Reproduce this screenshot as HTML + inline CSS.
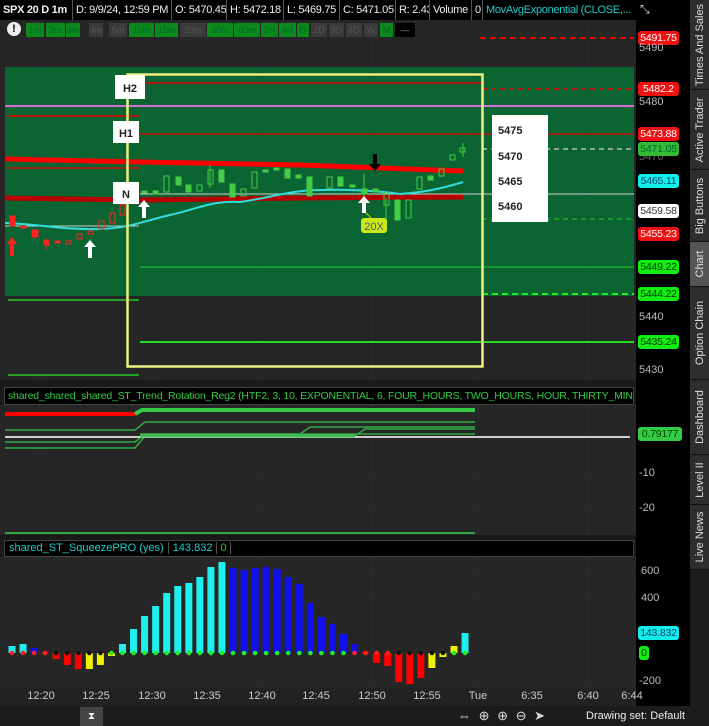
<!DOCTYPE html>
<html><head><meta charset="utf-8"><style>
*{margin:0;padding:0;box-sizing:border-box}
body{width:709px;height:726px;background:#1a1a1a;font-family:"Liberation Sans",sans-serif;position:relative;overflow:hidden;color:#ddd}
.a{position:absolute}
.hd{position:absolute;top:0;height:20px;background:#000;border-right:1px solid #555;font-size:11px;letter-spacing:-0.3px;line-height:20px;color:#eee;padding-left:3px;white-space:nowrap;overflow:hidden}
.tf{position:absolute;top:23px;height:14px;font-size:9px;line-height:14px;text-align:center;color:#123}
.g{background:#0a8a1a;color:#063}
.k{background:#3a3a3a;color:#555}
.pl{position:absolute;left:638px;width:41px;height:14px;border-radius:3px;font-size:10.5px;line-height:14px;text-align:center;letter-spacing:-0.2px}
.ax{position:absolute;font-size:11px;color:#bbb}
.tab{position:absolute;left:690px;width:19px;background:#2e2e2e;border-bottom:1px solid #111}
.tab span{position:absolute;left:50%;top:50%;transform:translate(-50%,-50%) rotate(-90deg);font-size:11px;white-space:nowrap;color:#ddd}
.t{position:absolute;top:690px;font-size:11px;color:#ccc;transform:translateX(-50%)}
</style></head><body>
<div class="a" style="left:0;top:20px;width:636px;height:360px;background:#262626"></div>
<div class="a" style="left:0;top:405px;width:636px;height:130px;background:#262626"></div>
<div class="a" style="left:0;top:557px;width:636px;height:131px;background:#262626"></div>
<div class="a" style="left:636px;top:20px;width:54px;height:686px;background:#000"></div>
<div class="a" style="left:0;top:688px;width:636px;height:18px;background:#222"></div>

<svg class="a" style="left:0;top:0" width="690" height="726">
<rect x="5" y="67" width="629" height="229" fill="#0b6533"/>
<g stroke="#3a3a3a" stroke-dasharray="1 3">
<line x1="40" y1="20" x2="40" y2="380"/><line x1="152" y1="20" x2="152" y2="380"/><line x1="262" y1="20" x2="262" y2="380"/><line x1="372" y1="20" x2="372" y2="380"/><line x1="478" y1="20" x2="478" y2="380"/><line x1="588" y1="20" x2="588" y2="380"/>
<line x1="40" y1="405" x2="40" y2="535"/><line x1="152" y1="405" x2="152" y2="535"/><line x1="262" y1="405" x2="262" y2="535"/><line x1="372" y1="405" x2="372" y2="535"/><line x1="478" y1="405" x2="478" y2="535"/><line x1="588" y1="405" x2="588" y2="535"/>
<line x1="40" y1="557" x2="40" y2="688"/><line x1="152" y1="557" x2="152" y2="688"/><line x1="262" y1="557" x2="262" y2="688"/><line x1="372" y1="557" x2="372" y2="688"/><line x1="478" y1="557" x2="478" y2="688"/><line x1="588" y1="557" x2="588" y2="688"/>
<line x1="0" y1="474" x2="636" y2="474"/><line x1="0" y1="509" x2="636" y2="509"/>
<line x1="0" y1="572" x2="636" y2="572"/><line x1="0" y1="599" x2="636" y2="599"/><line x1="0" y1="682" x2="636" y2="682"/>
</g>
<line x1="480" y1="38" x2="634" y2="38" stroke="#e00" stroke-width="2" stroke-dasharray="6 4"/>
<line x1="145" y1="83" x2="482" y2="83" stroke="#d00" stroke-width="1.5"/>
<line x1="482" y1="89" x2="634" y2="89" stroke="#d00" stroke-width="1.5" stroke-dasharray="5 4"/>
<line x1="5" y1="106" x2="634" y2="106" stroke="#d070d8" stroke-width="2"/>
<line x1="8" y1="116" x2="139" y2="116" stroke="#e00" stroke-width="1.5"/>
<line x1="140" y1="134" x2="634" y2="134" stroke="#d00" stroke-width="1.2"/>
<line x1="8" y1="168" x2="139" y2="168" stroke="#e00" stroke-width="1.2"/>
<path d="M5 159 L140 162 L300 165 L463 171" stroke="#f00" stroke-width="5" fill="none"/>
<path d="M5 198 L140 200 L300 198 L463 197" stroke="#b80000" stroke-width="5" fill="none"/>
<line x1="140" y1="194" x2="634" y2="194" stroke="#ccc" stroke-width="1"/>
<line x1="5" y1="226" x2="139" y2="226" stroke="#ccc" stroke-width="1"/>
<line x1="482" y1="149" x2="634" y2="149" stroke="#bbb" stroke-width="1.5" stroke-dasharray="5 4"/>
<line x1="482" y1="219" x2="634" y2="219" stroke="#2c2" stroke-width="1" stroke-dasharray="5 4"/>
<line x1="140" y1="267" x2="634" y2="267" stroke="#2c2" stroke-width="1"/>
<line x1="482" y1="294" x2="634" y2="294" stroke="#2e2" stroke-width="2" stroke-dasharray="6 4"/>
<line x1="8" y1="300" x2="139" y2="300" stroke="#2c2" stroke-width="1.5"/>
<line x1="140" y1="342" x2="634" y2="342" stroke="#2d2" stroke-width="2"/>
<line x1="8" y1="375" x2="139" y2="375" stroke="#2c2" stroke-width="1.5"/>
<path d="M5 223 C40 224 60 230 100 229 C130 228 140 222 170 215 C200 208 215 200 240 202 C270 198 290 190 320 190 C350 189 380 191 400 194 C430 192 450 186 463 182" stroke="#3dd" stroke-width="2" fill="none"/>
<rect x="127.5" y="74.5" width="355" height="292" fill="none" stroke="#f0f080" stroke-width="2.5"/>
<g stroke="#f22" fill="#f22">
<rect x="10" y="216" width="5" height="10"/><line x1="23" y1="226" x2="23" y2="229"/><rect x="21" y="226" width="5" height="2"/>
<rect x="32" y="230" width="6" height="7"/><rect x="44" y="240" width="5" height="5"/><line x1="46" y1="245" x2="46" y2="250"/>
<rect x="55" y="241" width="5" height="2"/><rect x="66" y="241" width="5" height="3" fill="none"/>
<rect x="77" y="234" width="5" height="5" fill="none"/><rect x="88" y="231" width="5" height="3" fill="none"/>
<rect x="99" y="221" width="5" height="8" fill="none"/><rect x="110" y="213" width="5" height="10" fill="none"/><rect x="120" y="205" width="5" height="10" fill="none"/>
</g>
<g stroke="#4c4" fill="#4c4">
<rect x="142" y="191" width="5" height="2"/><rect x="153" y="191" width="5" height="3"/><rect x="164" y="176" width="5" height="16" fill="none"/>
<rect x="176" y="177" width="5" height="8"/><rect x="186" y="185" width="5" height="7"/><rect x="197" y="185" width="5" height="6" fill="none"/>
<rect x="208" y="170" width="5" height="14" fill="none"/><line x1="210" y1="165" x2="210" y2="188"/><rect x="219" y="170" width="5" height="12"/>
<rect x="230" y="184" width="5" height="13"/><rect x="241" y="189" width="5" height="7" fill="none"/><rect x="252" y="172" width="5" height="16" fill="none"/>
<rect x="263" y="170" width="5" height="2"/><rect x="274" y="168" width="5" height="2"/><rect x="285" y="169" width="5" height="9"/>
<rect x="296" y="175" width="5" height="3"/><rect x="307" y="177" width="5" height="19"/><rect x="327" y="177" width="5" height="11" fill="none"/>
<rect x="338" y="177" width="5" height="9"/><rect x="350" y="185" width="5" height="2"/><rect x="362" y="189" width="5" height="5"/>
<line x1="364" y1="174" x2="364" y2="196"/><rect x="373" y="189" width="5" height="3"/><rect x="384" y="193" width="5" height="12" fill="none"/>
<line x1="386" y1="198" x2="386" y2="220"/><rect x="395" y="200" width="5" height="20"/><rect x="406" y="200" width="5" height="18" fill="none"/>
<rect x="417" y="177" width="5" height="12" fill="none"/><rect x="428" y="176" width="5" height="4"/><rect x="439" y="169" width="5" height="7" fill="none"/>
<rect x="450" y="155" width="5" height="5" fill="none"/><line x1="463" y1="143" x2="463" y2="157"/><rect x="460" y="148" width="5" height="4" fill="none"/>
</g>
<path d="M12 237 l-5 7 h3 v12 h4 v-12 h3z" fill="#f22"/>
<path d="M90 240 l-6 7 h4 v11 h4 v-11 h4z" fill="#fff"/>
<path d="M144 200 l-6 7 h4 v11 h4 v-11 h4z" fill="#fff"/>
<path d="M364 196 l-6 7 h4 v10 h4 v-10 h4z" fill="#fff"/>
<path d="M375 171 l-6 -7 h4 v-10 h4 v10 h4z" fill="#000"/>
<line x1="366" y1="213" x2="372" y2="219" stroke="#cd0"/>
<rect x="361" y="218" width="26" height="15" rx="3" fill="#c8e818"/>
<text x="374" y="230" font-size="11" text-anchor="middle" fill="#556" font-family="Liberation Sans">20X</text>
<rect x="115" y="75" width="30" height="24" fill="#fff"/><text x="130" y="92" font-size="11" font-weight="bold" text-anchor="middle" fill="#222" font-family="Liberation Sans">H2</text>
<rect x="113" y="121" width="26" height="22" fill="#fff"/><text x="126" y="137" font-size="11" font-weight="bold" text-anchor="middle" fill="#222" font-family="Liberation Sans">H1</text>
<rect x="113" y="182" width="26" height="22" fill="#fff"/><text x="126" y="198" font-size="11" font-weight="bold" text-anchor="middle" fill="#222" font-family="Liberation Sans">N</text>
<rect x="492" y="115" width="56" height="107" fill="#fff"/>
<g font-size="11" font-weight="bold" fill="#222" font-family="Liberation Sans"><text x="498" y="134">5475</text><text x="498" y="160">5470</text><text x="498" y="185">5465</text><text x="498" y="210">5460</text></g>
<line x1="5" y1="414" x2="135" y2="414" stroke="#f00" stroke-width="4"/>
<path d="M135 414 L142 410 L475 410" stroke="#3c4" stroke-width="4" fill="none"/>
<path d="M5 430 L135 430 L145 422 L475 422" stroke="#3a4" stroke-width="1.5" fill="none"/>
<path d="M140 434 L300 434 L310 427 L475 427" stroke="#3a4" stroke-width="1.5" fill="none"/>
<path d="M300 436 L355 436 L365 429 L475 429" stroke="#3a4" stroke-width="1.5" fill="none"/>
<path d="M5 442 L135 442 L145 434 L475 434" stroke="#3a4" stroke-width="1.5" fill="none"/>
<path d="M5 448 L135 448 L145 436" stroke="#3a4" stroke-width="1.5" fill="none"/>
<line x1="5" y1="437" x2="630" y2="437" stroke="#ccc" stroke-width="2"/>
<line x1="140" y1="436" x2="355" y2="436" stroke="#4b5" stroke-width="3"/>
<line x1="5" y1="533" x2="475" y2="533" stroke="#3a4" stroke-width="2"/>
<g id="bars"></g>
</svg>
<script>
(function(){var t=[646,644,648,652,659,665,669,669,665,656,644,629,616,606,593,586,583,577,567,562,568,570,568,567,569,577,584,603,617,624,634,644,652,663,666,682,684,678,668,657,646,633];
var c="ccbrrrryyyccccccccccbbbbbbbbbbbbrrrrrryyycc";var col={c:"#1ef0f0",b:"#1010ee",r:"#f00",y:"#f0f000"};
var z=653,s="";
for(var i=0;i<t.length;i++){var x=12+i*11.05,y=t[i],h=Math.abs(y-z),yy=Math.min(y,z);if(h<1)h=1;
s+='<rect x="'+(x-3.5)+'" y="'+yy+'" width="7" height="'+h+'" fill="'+col[c[i]]+'"/>';
var dc=i<4?"#f22":(i<9?"#111":(i<31?"#2e2":(i<35?"#f22":"#111")));if(i>=40)dc="#2e2";
s+='<circle cx="'+x+'" cy="'+z+'" r="2.3" fill="'+dc+'"/>';}
document.getElementById("bars").innerHTML=s;})();
</script>

<div class="hd" style="left:0;width:73px;font-weight:bold">SPX 20 D 1m</div>
<div class="hd" style="left:73px;width:99px">D: 9/9/24, 12:59 PM</div>
<div class="hd" style="left:172px;width:55px">O: 5470.45</div>
<div class="hd" style="left:227px;width:57px">H: 5472.18</div>
<div class="hd" style="left:284px;width:56px">L: 5469.75</div>
<div class="hd" style="left:340px;width:56px">C: 5471.05</div>
<div class="hd" style="left:396px;width:34px">R: 2.43</div>
<div class="hd" style="left:430px;width:42px">Volume</div>
<div class="hd" style="left:472px;width:11px">0</div>
<div class="hd" style="left:483px;width:153px;color:#2cc;border:none">MovAvgExponential (CLOSE,...</div>
<div class="a" style="left:636px;top:0;width:54px;height:20px;background:#000;color:#ddd;font-size:12px;padding:2px 4px">⤡</div>
<div class="a" style="left:7px;top:22px;width:14px;height:14px;border-radius:50%;background:#eee;color:#000;font-size:11px;font-weight:bold;text-align:center;line-height:14px">!</div>
<div class="tf g" style="left:26px;width:18px">1m</div><div class="tf g" style="left:46px;width:19px">2m</div><div class="tf g" style="left:66px;width:14px">3m</div>
<div class="tf k" style="left:89px;width:14px">4m</div><div class="tf k" style="left:109px;width:18px">5m</div>
<div class="tf g" style="left:129px;width:25px">10m</div><div class="tf g" style="left:155px;width:23px">15m</div><div class="tf k" style="left:180px;width:26px">20m</div>
<div class="tf g" style="left:207px;width:26px">30m</div><div class="tf g" style="left:234px;width:26px">60m</div><div class="tf g" style="left:261px;width:17px">2H</div>
<div class="tf g" style="left:279px;width:17px">4H</div><div class="tf g" style="left:297px;width:12px">D</div>
<div class="tf k" style="left:311px;width:16px">2D</div><div class="tf k" style="left:329px;width:15px">3D</div><div class="tf k" style="left:346px;width:16px">4D</div><div class="tf k" style="left:364px;width:14px">W</div>
<div class="tf g" style="left:380px;width:13px">M</div><div class="tf" style="left:395px;width:20px;background:#000;color:#888">—</div>

<div class="pl" style="top:31px;background:#e11;color:#fff">5491.75</div>
<div class="ax" style="left:639px;top:42px">5490</div>
<div class="pl" style="top:82px;background:#e11;color:#fff">5482.2</div>
<div class="ax" style="left:639px;top:96px">5480</div>
<div class="pl" style="top:127px;background:#e11;color:#fff">5473.88</div>
<div class="ax" style="left:639px;top:151px;color:#666">5470</div>
<div class="pl" style="top:142px;background:#3b3;color:#063">5471.05</div>
<div class="pl" style="top:174px;background:#1ee;color:#046">5465.11</div>
<div class="pl" style="top:204px;background:#fff;color:#333">5459.58</div>
<div class="pl" style="top:227px;background:#e11;color:#fff">5455.23</div>
<div class="pl" style="top:260px;background:#1e1;color:#030">5449.22</div>
<div class="pl" style="top:287px;background:#1e1;color:#030">5444.22</div>
<div class="ax" style="left:639px;top:311px">5440</div>
<div class="pl" style="top:335px;background:#1e1;color:#030">5435.24</div>
<div class="ax" style="left:639px;top:364px">5430</div>
<div class="pl" style="top:427px;background:#3c4;color:#040;width:44px">0.79177</div>
<div class="ax" style="left:639px;top:467px">-10</div>
<div class="ax" style="left:639px;top:502px">-20</div>
<div class="ax" style="left:641px;top:565px">600</div>
<div class="ax" style="left:641px;top:592px">400</div>
<div class="pl" style="top:626px;background:#1ee;color:#046">143.832</div>
<div class="pl" style="top:646px;left:639px;width:10px;background:#1e1;color:#030">0</div>
<div class="ax" style="left:639px;top:675px">-200</div>

<div class="a" style="left:4px;top:387px;width:630px;height:18px;background:#000;border:1px solid #444;color:#3c4;font-size:10.5px;letter-spacing:-0.2px;line-height:16px;padding-left:3px;white-space:nowrap;overflow:hidden">shared_shared_shared_ST_Trend_Rotation_Reg2 (HTF2, 3, 10, EXPONENTIAL, 6, FOUR_HOURS, TWO_HOURS, HOUR, THIRTY_MIN,...</div>
<div class="a" style="left:4px;top:540px;width:630px;height:17px;background:#000;border:1px solid #444;font-size:11px;line-height:15px;white-space:nowrap">
<span style="color:#2cc;padding:0 4px;border-right:1px solid #555">shared_ST_SqueezePRO (yes)</span><span style="color:#2cc;padding:0 4px;border-right:1px solid #555">143.832</span><span style="color:#2c2;padding:0 3px;border-right:1px solid #555">0</span></div>

<div class="t" style="left:41px">12:20</div><div class="t" style="left:96px">12:25</div><div class="t" style="left:152px">12:30</div><div class="t" style="left:207px">12:35</div>
<div class="t" style="left:262px">12:40</div><div class="t" style="left:316px">12:45</div><div class="t" style="left:372px">12:50</div><div class="t" style="left:427px">12:55</div>
<div class="t" style="left:478px">Tue</div><div class="t" style="left:532px">6:35</div><div class="t" style="left:588px">6:40</div><div class="t" style="left:632px">6:44</div>

<div class="a" style="left:0;top:706px;width:690px;height:20px;background:#1c1c1c"></div>
<div class="a" style="left:80px;top:707px;width:23px;height:19px;background:#444;color:#eee;font-size:10px;text-align:center;line-height:19px">⧗</div>
<div class="a" style="left:458px;top:708px;font-size:13px;color:#ddd;letter-spacing:2px">⇔ ⊕ ⊕ ⊖ ➤</div>
<div class="a" style="left:586px;top:710px;font-size:11px;color:#eee;white-space:nowrap">Drawing set: Default</div>

<div class="tab" style="top:0;height:90px"><span>Times And Sales</span></div>
<div class="tab" style="top:90px;height:80px"><span>Active Trader</span></div>
<div class="tab" style="top:170px;height:72px"><span>Big Buttons</span></div>
<div class="tab" style="top:242px;height:45px;background:#555"><span>Chart</span></div>
<div class="tab" style="top:287px;height:93px"><span>Option Chain</span></div>
<div class="tab" style="top:380px;height:75px"><span>Dashboard</span></div>
<div class="tab" style="top:455px;height:50px"><span>Level II</span></div>
<div class="tab" style="top:505px;height:65px"><span>Live News</span></div>
<div class="a" style="left:690px;top:570px;width:19px;height:156px;background:#1c1c1c"></div>
</body></html>
